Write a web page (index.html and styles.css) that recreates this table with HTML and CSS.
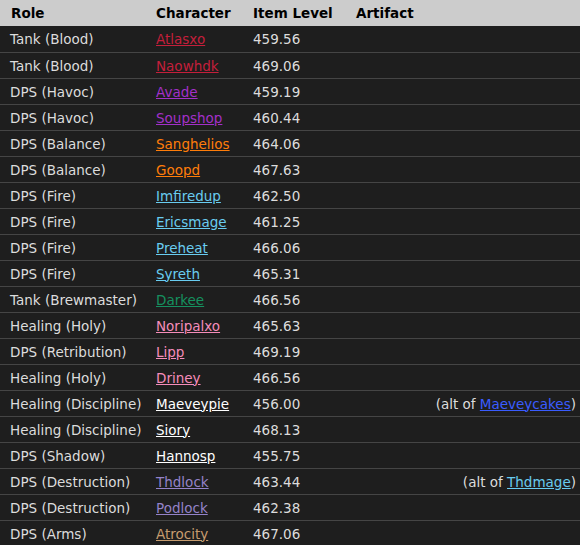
FILE: index.html
```html
<!DOCTYPE html>
<html>
<head>
<meta charset="utf-8">
<link rel="stylesheet" href="styles.css">
</head>
<body>
<table class="roster">
  <colgroup>
    <col class="c-role"><col class="c-char"><col class="c-ilvl"><col class="c-art"><col class="c-note">
  </colgroup>
  <thead>
    <tr><th class="first">Role</th><th>Character</th><th>Item Level</th><th>Artifact</th><th></th></tr>
  </thead>
  <tbody>
    <tr><td>Tank (Blood)</td><td><a class="dk" href="#">Atlasxo</a></td><td>459.56</td><td></td><td></td></tr>
    <tr><td>Tank (Blood)</td><td><a class="dk" href="#">Naowhdk</a></td><td>469.06</td><td></td><td></td></tr>
    <tr><td>DPS (Havoc)</td><td><a class="dh" href="#">Avade</a></td><td>459.19</td><td></td><td></td></tr>
    <tr><td>DPS (Havoc)</td><td><a class="dh" href="#">Soupshop</a></td><td>460.44</td><td></td><td></td></tr>
    <tr><td>DPS (Balance)</td><td><a class="druid" href="#">Sanghelios</a></td><td>464.06</td><td></td><td></td></tr>
    <tr><td>DPS (Balance)</td><td><a class="druid" href="#">Goopd</a></td><td>467.63</td><td></td><td></td></tr>
    <tr><td>DPS (Fire)</td><td><a class="mage" href="#">Imfiredup</a></td><td>462.50</td><td></td><td></td></tr>
    <tr><td>DPS (Fire)</td><td><a class="mage" href="#">Ericsmage</a></td><td>461.25</td><td></td><td></td></tr>
    <tr><td>DPS (Fire)</td><td><a class="mage" href="#">Preheat</a></td><td>466.06</td><td></td><td></td></tr>
    <tr><td>DPS (Fire)</td><td><a class="mage" href="#">Syreth</a></td><td>465.31</td><td></td><td></td></tr>
    <tr><td>Tank (Brewmaster)</td><td><a class="monk" href="#">Darkee</a></td><td>466.56</td><td></td><td></td></tr>
    <tr><td>Healing (Holy)</td><td><a class="pala" href="#">Noripalxo</a></td><td>465.63</td><td></td><td></td></tr>
    <tr><td>DPS (Retribution)</td><td><a class="pala" href="#">Lipp</a></td><td>469.19</td><td></td><td></td></tr>
    <tr><td>Healing (Holy)</td><td><a class="pala" href="#">Driney</a></td><td>466.56</td><td></td><td></td></tr>
    <tr><td>Healing (Discipline)</td><td><a class="priest" href="#">Maeveypie</a></td><td>456.00</td><td></td><td class="note">(alt of <a class="alt" href="#">Maeveycakes</a>)</td></tr>
    <tr><td>Healing (Discipline)</td><td><a class="priest" href="#">Siory</a></td><td>468.13</td><td></td><td></td></tr>
    <tr><td>DPS (Shadow)</td><td><a class="priest" href="#">Hannosp</a></td><td>455.75</td><td></td><td></td></tr>
    <tr><td>DPS (Destruction)</td><td><a class="lock" href="#">Thdlock</a></td><td>463.44</td><td></td><td class="note">(alt of <a class="mage" href="#">Thdmage</a>)</td></tr>
    <tr><td>DPS (Destruction)</td><td><a class="lock" href="#">Podlock</a></td><td>462.38</td><td></td><td></td></tr>
    <tr><td>DPS (Arms)</td><td><a class="warr" href="#">Atrocity</a></td><td>467.06</td><td></td><td></td></tr>
  </tbody>
</table>
</body>
</html>
```

FILE: styles.css
```css
html, body {
  margin: 0;
  padding: 0;
  background: #1e1e1e;
}
body {
  font-family: "DejaVu Sans", Verdana, sans-serif;
  font-size: 13.5px;
  color: #dcdcdc;
}
.roster {
  width: 580px;
  border-collapse: collapse;
  table-layout: fixed;
}
.c-role { width: 146px; }
.c-char { width: 97px; }
.c-ilvl { width: 103px; }
.c-art { width: 70px; }
.roster th {
  background: #cccccc;
  color: #000;
  font-weight: bold;
  text-align: left;
  height: 26px;
  padding: 0 0 0 10px;
  box-sizing: border-box;
  white-space: nowrap;
}
.roster th.first {
  padding-left: 11px;
}
.roster td {
  height: 26px;
  box-sizing: border-box;
  padding: 1px 0 0 10px;
  border-bottom: 1px solid #454545;
  white-space: nowrap;
}
.roster td.note {
  text-align: right;
  padding-right: 4px;
}
a { text-decoration: underline; }
.dk { color: #c41f3b; }
.dh { color: #a330c9; }
.druid { color: #ff7d0a; }
.mage { color: #69ccf0; }
.monk { color: #15905f; }
.pala { color: #f58cba; }
.priest { color: #ffffff; }
.lock { color: #9482c9; }
.warr { color: #c79c6e; }
.alt { color: #3a5cff; }
```
